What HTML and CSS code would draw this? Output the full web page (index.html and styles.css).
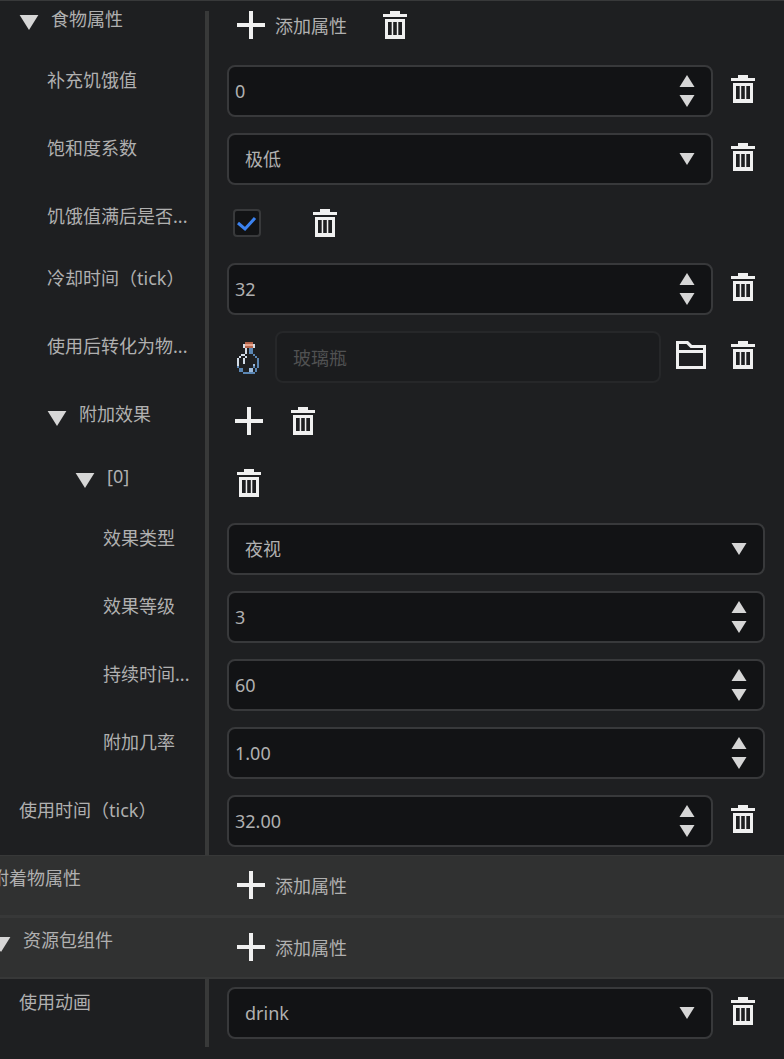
FILE: index.html
```html
<!DOCTYPE html>
<html lang="zh-CN">
<head>
  <meta charset="UTF-8">
  <meta name="viewport" content="width=device-width, initial-scale=1.0">
  <title>组件属性</title>
  <link rel="stylesheet" href="styles.css">
</head>
<body>

<!-- Icons -->
<svg class="sprite" aria-hidden="true">
  <symbol id="plus" viewBox="0 0 28 28"><path d="M12 0h4v12h12v4H16v12h-4V16H0v-4h12z"/></symbol>
  <symbol id="trash" viewBox="0 0 24 28"><path fill-rule="evenodd" d="M7 0h10v3h7v3H0V3h7zM2 8h20v20H2zM5 11v13h3.700V11zM10.200 11v13h3.600V11zM15.300 11v13H19V11z"/></symbol>
  <symbol id="folder" viewBox="0 0 30 28"><path fill-rule="evenodd" d="M0 0h12l4 4h14v24H0zM3 3v6h24V7H14.500l-4-4zM3 12v13h24V12z"/></symbol>
  <symbol id="down" viewBox="0 0 20 16"><path d="M0 0h20L10 16z"/></symbol>
  <symbol id="up" viewBox="0 0 20 16"><path d="M0 16h20L10 0z"/></symbol>
</svg>

<main class="panel">

  <!-- Food -->
  <div class="row short first depth-1">
    <div class="name">
      <button class="toggle" aria-label="折叠"><svg><use href="#down"/></svg></button>
      <span>食物属性</span>
    </div>
    <div class="value">
      <button class="add"><svg class="plus"><use href="#plus"/></svg><span>添加属性</span></button>
      <button class="icon" aria-label="删除"><svg class="trash"><use href="#trash"/></svg></button>
    </div>
  </div>

  <div class="row depth-2">
    <label class="name" for="hunger">补充饥饿值</label>
    <div class="value">
      <div class="field">
        <input type="text" inputmode="numeric" id="hunger" value="0">
        <div class="spin">
          <button aria-label="增加"><svg><use href="#up"/></svg></button>
          <button aria-label="减少"><svg><use href="#down"/></svg></button>
        </div>
      </div>
      <button class="icon" aria-label="删除"><svg class="trash"><use href="#trash"/></svg></button>
    </div>
  </div>

  <div class="row depth-2">
    <label class="name" for="saturation">饱和度系数</label>
    <div class="value">
      <div class="field">
        <select id="saturation"><option>极低</option></select>
        <svg class="caret"><use href="#down"/></svg>
      </div>
      <button class="icon" aria-label="删除"><svg class="trash"><use href="#trash"/></svg></button>
    </div>
  </div>

  <div class="row short depth-2">
    <label class="name" for="always">饥饿值满后是否...</label>
    <div class="value">
      <div class="check">
        <input type="checkbox" id="always" checked>
        <svg viewBox="0 0 28 28"><path d="M5 14l7 6L22 9"/></svg>
      </div>
      <button class="icon" aria-label="删除"><svg class="trash"><use href="#trash"/></svg></button>
    </div>
  </div>

  <div class="row depth-2">
    <label class="name" for="cooldown">冷却时间（tick）</label>
    <div class="value">
      <div class="field">
        <input type="text" inputmode="numeric" id="cooldown" value="32">
        <div class="spin">
          <button aria-label="增加"><svg><use href="#up"/></svg></button>
          <button aria-label="减少"><svg><use href="#down"/></svg></button>
        </div>
      </div>
      <button class="icon" aria-label="删除"><svg class="trash"><use href="#trash"/></svg></button>
    </div>
  </div>

  <div class="row depth-2">
    <label class="name" for="convert">使用后转化为物...</label>
    <div class="value">
      <svg class="bottle" viewBox="0 0 12 16" shape-rendering="crispEdges">
        <path fill="#b5654d" d="M4 0h4v1H4zM4 2h4v1H4z"/>
        <path fill="#e8a58c" d="M4 1h4v1H4z"/>
        <path fill="#d3dce6" d="M3 1h1v2H3zM8 1h1v2H8zM4 3h1v3H4zM2 6h2v1H2zM1 7h1v1H1zM0 8h1v4H0zM3 8h1v3H3zM4 7h1v1H4z"/>
        <path fill="#5b86b3" d="M6 3h2v3H6zM8 6h1v1H8zM9 7h1v1H9zM10 8h1v5h-1zM0 12h1v1H0zM1 13h2v2H1zM3 15h6v1H3zM9 13h1v2H9zM8 12h1v1H8z"/>
        <path fill="#9bb9dc" d="M6 13h2v2H6zM8 11h1v1H8z"/>
      </svg>
      <div class="field disabled">
        <input type="text" id="convert" value="玻璃瓶" disabled>
      </div>
      <button class="icon" aria-label="选择"><svg class="folder"><use href="#folder"/></svg></button>
      <button class="icon" aria-label="删除"><svg class="trash"><use href="#trash"/></svg></button>
    </div>
  </div>

  <!-- Effects -->
  <div class="row short depth-2">
    <div class="name">
      <button class="toggle" aria-label="折叠"><svg><use href="#down"/></svg></button>
      <span>附加效果</span>
    </div>
    <div class="value">
      <button class="icon" aria-label="添加"><svg class="plus"><use href="#plus"/></svg></button>
      <button class="icon" aria-label="删除"><svg class="trash"><use href="#trash"/></svg></button>
    </div>
  </div>

  <div class="row short depth-3">
    <div class="name">
      <button class="toggle" aria-label="折叠"><svg><use href="#down"/></svg></button>
      <span>[0]</span>
    </div>
    <div class="value">
      <button class="icon" aria-label="删除"><svg class="trash"><use href="#trash"/></svg></button>
    </div>
  </div>

  <div class="row depth-4">
    <label class="name" for="effect">效果类型</label>
    <div class="value">
      <div class="field">
        <select id="effect"><option>夜视</option></select>
        <svg class="caret"><use href="#down"/></svg>
      </div>
    </div>
  </div>

  <div class="row depth-4">
    <label class="name" for="level">效果等级</label>
    <div class="value">
      <div class="field">
        <input type="text" inputmode="numeric" id="level" value="3">
        <div class="spin">
          <button aria-label="增加"><svg><use href="#up"/></svg></button>
          <button aria-label="减少"><svg><use href="#down"/></svg></button>
        </div>
      </div>
    </div>
  </div>

  <div class="row depth-4">
    <label class="name" for="duration">持续时间...</label>
    <div class="value">
      <div class="field">
        <input type="text" inputmode="numeric" id="duration" value="60">
        <div class="spin">
          <button aria-label="增加"><svg><use href="#up"/></svg></button>
          <button aria-label="减少"><svg><use href="#down"/></svg></button>
        </div>
      </div>
    </div>
  </div>

  <div class="row depth-4">
    <label class="name" for="chance">附加几率</label>
    <div class="value">
      <div class="field">
        <input type="text" inputmode="decimal" id="chance" value="1.00">
        <div class="spin">
          <button aria-label="增加"><svg><use href="#up"/></svg></button>
          <button aria-label="减少"><svg><use href="#down"/></svg></button>
        </div>
      </div>
    </div>
  </div>

  <div class="row depth-1">
    <label class="name" for="usetime">使用时间（tick）</label>
    <div class="value">
      <div class="field">
        <input type="text" inputmode="decimal" id="usetime" value="32.00">
        <div class="spin">
          <button aria-label="增加"><svg><use href="#up"/></svg></button>
          <button aria-label="减少"><svg><use href="#down"/></svg></button>
        </div>
      </div>
      <button class="icon" aria-label="删除"><svg class="trash"><use href="#trash"/></svg></button>
    </div>
  </div>

  <!-- Attachables -->
  <div class="row short band depth-0">
    <div class="name"><span>附着物属性</span></div>
    <div class="value">
      <button class="add"><svg class="plus"><use href="#plus"/></svg><span>添加属性</span></button>
    </div>
  </div>

  <!-- Resource pack -->
  <div class="row short band depth-0">
    <div class="name">
      <button class="toggle" aria-label="折叠"><svg><use href="#down"/></svg></button>
      <span>资源包组件</span>
    </div>
    <div class="value">
      <button class="add"><svg class="plus"><use href="#plus"/></svg><span>添加属性</span></button>
    </div>
  </div>

  <div class="row depth-1">
    <label class="name" for="animation">使用动画</label>
    <div class="value">
      <div class="field">
        <select id="animation"><option>drink</option></select>
        <svg class="caret"><use href="#down"/></svg>
      </div>
      <button class="icon" aria-label="删除"><svg class="trash"><use href="#trash"/></svg></button>
    </div>
  </div>

</main>

</body>
</html>
```

FILE: styles.css
```css
* { box-sizing: border-box; }

body {
  margin: 0;
  background: #1e1f21;
  color: #b0b0b0;
  font-family: "Noto Sans", "Noto Sans CJK SC", sans-serif;
  font-size: 18px;
  line-height: 20px;
}

button, input, select {
  font: inherit;
  color: inherit;
}

button {
  background: none;
  border: none;
  padding: 0;
  cursor: pointer;
}

svg {
  display: block;
  flex: none;
  fill: #f0f0f0;
}

.sprite {
  position: absolute;
  width: 0;
  height: 0;
}

.panel {
  border-top: 1px solid #38393a;
  padding-top: 10px;
  padding-bottom: 12px;
  overflow: hidden;
}

.row {
  display: grid;
  grid-template-columns: 205px 1fr;
}

.name {
  display: flex;
  align-items: flex-start;
  gap: 12px;
  padding-top: 13px;
  white-space: nowrap;
}

.depth-0 .name { margin-left: -9px; }
.depth-1 .name { margin-left: 19px; }
.depth-2 .name { margin-left: 47px; }
.depth-3 .name { margin-left: 75px; }
.depth-4 .name { margin-left: 103px; }

.toggle { padding-top: 7px; }

.toggle svg {
  width: 20px;
  height: 15px;
  fill: #d6d6d6;
}

.value {
  display: flex;
  align-items: center;
  gap: 8px;
  min-width: 0;
  min-height: 68px;
  padding: 8px 19px 8px 18px;
  border-left: 4px solid #383939;
}

.short .value {
  gap: 10px;
  min-height: 62px;
  padding-bottom: 10px;
}

/* Top row sits flush with the start of the divider */
.first .name {
  padding-top: 0;
  line-height: 16px;
}

.first .toggle { padding-top: 4px; }

.first .value {
  align-items: flex-start;
  min-height: 46px;
  padding-top: 0;
}

.band {
  background: #303131;
  border-top: 1px solid #373838;
  border-bottom: 2px solid #373838;
}

.band .name { padding-top: 12px; }

.band .value {
  min-height: 59px;
  padding-top: 7px;
  padding-bottom: 8px;
  border-left-color: transparent;
}

/* Buttons */
.icon {
  display: flex;
  justify-content: center;
  flex: none;
  width: 44px;
  margin-bottom: 4px;
}

.short .icon { margin-bottom: 0; }

.add {
  display: flex;
  align-items: center;
  gap: 10px;
  padding: 0 16px 0 10px;
  line-height: 20px;
}

.add span { padding-top: 2px; }

.plus { width: 28px; height: 28px; }
.trash { width: 24px; height: 28px; }
.folder { width: 30px; height: 28px; }

/* Fields */
.field {
  display: flex;
  align-items: center;
  position: relative;
  flex: 1;
  min-width: 0;
  height: 52px;
  background: #121315;
  border: 2px solid #38393b;
  border-radius: 8px;
}

.field input, .field select {
  flex: 1;
  min-width: 0;
  height: 100%;
  margin: 0;
  padding: 0 6px;
  background: none;
  border: none;
  outline: none;
}

.field select {
  appearance: none;
  padding: 0 16px;
}

.field option { background: #121315; }

.spin {
  display: flex;
  flex-direction: column;
  gap: 8px;
  padding-right: 16px;
}

.spin svg, .caret {
  width: 16px;
  height: 12px;
  fill: #d6d6d6;
}

.caret {
  position: absolute;
  right: 16px;
  pointer-events: none;
}

.disabled {
  background: #1b1c1e;
  border-color: #262729;
}

.disabled input {
  padding: 0 16px;
  color: #505152;
}

.bottle {
  width: 24px;
  height: 32px;
  margin: 2px 6px 0 10px;
}

/* Checkbox */
.check {
  position: relative;
  width: 66px;
  height: 28px;
  padding-left: 6px;
}

.check input {
  appearance: none;
  display: block;
  width: 28px;
  height: 28px;
  margin: 0;
  background: #121315;
  border: 2px solid #38393b;
  border-radius: 4px;
}

.check svg {
  position: absolute;
  top: 0;
  left: 6px;
  width: 28px;
  height: 28px;
  fill: none;
  stroke: #3b82f0;
  stroke-width: 3;
  pointer-events: none;
  visibility: hidden;
}

.check input:checked + svg { visibility: visible; }
```
